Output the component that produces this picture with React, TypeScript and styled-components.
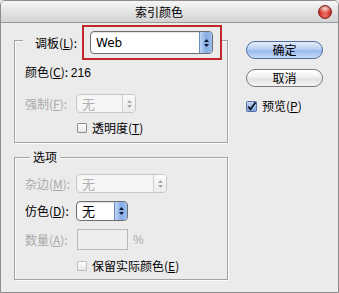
import React from 'react';
import styled, { createGlobalStyle } from 'styled-components';

const Global = createGlobalStyle`
  html, body { margin: 0; padding: 0; background: #ebebeb; }
  body {
    font-family: "Noto Sans CJK SC", "Noto Sans", sans-serif;
    font-size: 12px;
    color: #000;
  }
`;

const Window = styled.div`
  width: 339px;
  height: 293px;
  box-sizing: border-box;
  border: 1px solid #8c8c8c;
  border-radius: 5px 5px 0 0;
  background: #ebebeb;
  overflow: hidden;
  display: flex;
  flex-direction: column;
`;

const TitleBar = styled.div`
  height: 22px;
  box-sizing: border-box;
  flex: none;
  display: flex;
  align-items: center;
  background: linear-gradient(#f6f6f6, #e4e4e4 50%, #d3d3d3);
  border-bottom: 1px solid #9a9a9a;
`;

const Title = styled.div`
  flex: 1;
  text-align: center;
  font-size: 12px;
  line-height: 14px;
`;

const CloseArea = styled.div`
  width: 21px;
  display: flex;
  align-items: center;
`;

const CloseButton = styled.span`
  width: 14px;
  height: 14px;
  margin-left: 1px;
  box-sizing: border-box;
  border-radius: 50%;
  border: 1px solid #7c2320;
  background:
    radial-gradient(ellipse 60% 40% at 50% 22%, rgba(255, 230, 225, 0.95), rgba(255, 200, 190, 0) 100%),
    radial-gradient(circle at 50% 75%, #f07a6e 0%, #d3332b 45%, #98100d 100%);
`;

const Body = styled.div`
  display: flex;
  padding-left: 13px;
`;

const LeftCol = styled.div`
  width: 214px;
  display: flex;
  flex-direction: column;
`;

const Group = styled.div<{ $top: number; $pb: number }>`
  margin-top: ${(p) => p.$top}px;
  border: 1px solid #a2a2a2;
  box-shadow: inset 1px 1px 0 #fbfbfb, 1px 1px 0 #fbfbfb;
  padding: 0 0 ${(p) => p.$pb}px 10px;
  display: flex;
  flex-direction: column;
`;

const PaletteHeader = styled.div`
  margin-top: -16px;
  margin-left: -2px;
  align-self: flex-start;
  background: #ebebeb;
  padding-left: 12px;
  display: flex;
  align-items: center;
`;

const HeaderLabel = styled.span`
  width: 47px;
  line-height: 14px;
`;

const Highlight = styled.div`
  border: 2px solid #c1262d;
  padding: 4px 7px 4px 6px;
  background: #ebebeb;
`;

const Legend = styled.div`
  margin-top: -8px;
  margin-left: 5px;
  align-self: flex-start;
  padding: 0 3px;
  background: #ebebeb;
  line-height: 14px;
`;

const Row = styled.div<{ $mt: number; $h: number }>`
  margin-top: ${(p) => p.$mt}px;
  height: ${(p) => p.$h}px;
  display: grid;
  grid-template-columns: 51px auto;
  align-items: center;
  justify-items: start;
`;

const Label = styled.span<{ $disabled?: boolean }>`
  line-height: 14px;
  white-space: nowrap;
  color: ${(p) => (p.$disabled ? '#aaaaaa' : '#000')};
`;

const InfoLine = styled.div<{ $mt: number }>`
  margin-top: ${(p) => p.$mt}px;
  line-height: 14px;
`;

const Num = styled.span`
  font-family: "Liberation Sans", sans-serif;
  font-size: 12px;
`;

const SelectBox = styled.div<{ $w: number; $h: number; $disabled?: boolean }>`
  width: ${(p) => p.$w}px;
  height: ${(p) => p.$h}px;
  box-sizing: border-box;
  border: 1px solid ${(p) => (p.$disabled ? '#c6c6c6' : '#6e6e6e')};
  border-radius: 4px;
  background: ${(p) => (p.$disabled ? '#f5f5f5' : '#fff')};
  box-shadow: ${(p) => (p.$disabled ? 'none' : 'inset 0 1px 1px rgba(0,0,0,0.12)')};
  display: flex;
  align-items: center;
  overflow: hidden;
`;

const SelectText = styled.span<{ $disabled?: boolean; $latin?: boolean }>`
  flex: 1;
  padding-left: 5px;
  line-height: 14px;
  font-family: ${(p) =>
    p.$latin ? '"DejaVu Sans", sans-serif' : '"Noto Sans CJK SC", sans-serif'};
  font-size: ${(p) => (p.$latin ? 12 : 13)}px;
  color: ${(p) => (p.$disabled ? '#b0b0b0' : '#000')};
`;

const Stepper = styled.span<{ $disabled?: boolean }>`
  width: 13px;
  align-self: stretch;
  box-sizing: border-box;
  border-left: 1px solid ${(p) => (p.$disabled ? '#d0d0d0' : '#6c8cc0')};
  background: ${(p) =>
    p.$disabled
      ? 'linear-gradient(#fbfbfb, #ececec)'
      : 'linear-gradient(90deg, #c2d6f4, #86acE6 50%, #9cbdee)'};
  display: flex;
  flex-direction: column;
  align-items: center;
  justify-content: center;
  gap: 2px;
`;

const Arrow = ({ up, color }: { up: boolean; color: string }) => (
  <svg width="5" height="3" viewBox="0 0 5 3" style={{ display: 'block' }}>
    <polygon points={up ? '0,3 5,3 2.5,0' : '0,0 5,0 2.5,3'} fill={color} />
  </svg>
);

const Select = ({
  w,
  h,
  text,
  disabled,
  latin,
}: {
  w: number;
  h: number;
  text: string;
  disabled?: boolean;
  latin?: boolean;
}) => (
  <SelectBox $w={w} $h={h} $disabled={disabled}>
    <SelectText $disabled={disabled} $latin={latin}>
      {text}
    </SelectText>
    <Stepper $disabled={disabled}>
      <Arrow up color={disabled ? '#a8a8a8' : '#101830'} />
      <Arrow up={false} color={disabled ? '#a8a8a8' : '#101830'} />
    </Stepper>
  </SelectBox>
);

const InputWrap = styled.div`
  display: flex;
  align-items: center;
  margin-left: 1px;
`;

const InputBox = styled.div`
  width: 51px;
  height: 21px;
  box-sizing: border-box;
  border: 1px solid #b9b9b9;
  background: #eeeeee;
`;

const Percent = styled.span`
  margin-left: 5px;
  color: #aaaaaa;
  font-family: "Liberation Sans", sans-serif;
  font-size: 12px;
`;

const CheckRow = styled.div<{ $mt: number; $ml: number }>`
  margin-top: ${(p) => p.$mt}px;
  margin-left: ${(p) => p.$ml}px;
  height: 14px;
  display: flex;
  align-items: center;
  gap: 5px;
  line-height: 14px;
`;

const Box = styled.span<{ $light?: boolean }>`
  width: 10px;
  height: 10px;
  box-sizing: border-box;
  border: 1px solid ${(p) => (p.$light ? '#bdbdbd' : '#8e8e8e')};
  border-radius: 1px;
  background: linear-gradient(#ffffff, #e6e6e6);
`;

const CheckedBox = () => (
  <svg width="11" height="11" viewBox="0 0 11 11" style={{ display: 'block' }}>
    <defs>
      <linearGradient id="cbg" x1="0" y1="0" x2="0" y2="1">
        <stop offset="0" stopColor="#c3d6f3" />
        <stop offset="1" stopColor="#7ea3dc" />
      </linearGradient>
    </defs>
    <rect x="0.5" y="0.5" width="10" height="10" rx="1" fill="url(#cbg)" stroke="#5570a0" />
    <path d="M2.3 5.6 L4.5 8.3 L9.6 1.2" fill="none" stroke="#0d1424" strokeWidth="1.8" />
  </svg>
);

const RightCol = styled.div`
  margin-left: 18px;
  width: 77px;
  display: flex;
  flex-direction: column;
`;

const PillButton = styled.div<{ $primary?: boolean; $mt: number }>`
  margin-top: ${(p) => p.$mt}px;
  height: 18px;
  box-sizing: border-box;
  border-radius: 9px;
  border: 1px solid ${(p) => (p.$primary ? '#4f6f9f' : '#7d7d7d')};
  background: ${(p) =>
    p.$primary
      ? 'linear-gradient(#e4edfa, #b9d0f1 45%, #98b9ea 55%, #c6dbf6)'
      : 'linear-gradient(#ffffff, #f1f1f1 45%, #e2e2e2 55%, #f4f4f4)'};
  display: flex;
  align-items: center;
  justify-content: center;
  font-size: 12px;
  line-height: 14px;
`;

const U = styled.span`
  text-decoration: underline;
`;

export default function App() {
  return (
    <>
      <Global />
      <Window>
        <TitleBar>
          <Title>索引颜色</Title>
          <CloseArea>
            <CloseButton />
          </CloseArea>
        </TitleBar>
        <Body>
          <LeftCol>
            <Group $top={17} $pb={7}>
              <PaletteHeader>
                <HeaderLabel>
                  调板(<U>L</U>):
                </HeaderLabel>
                <Highlight>
                  <Select w={123} h={23} text="Web" latin />
                </Highlight>
              </PaletteHeader>
              <InfoLine $mt={5}>
                颜色(<U>C</U>): <Num>216</Num>
              </InfoLine>
              <Row $mt={14} $h={19}>
                <Label $disabled>
                  强制(<U>F</U>):
                </Label>
                <Select w={60} h={19} text="无" disabled />
              </Row>
              <CheckRow $mt={8} $ml={52}>
                <Box />
                <span>
                  透明度(<U>T</U>)
                </span>
              </CheckRow>
            </Group>
            <Group $top={14} $pb={6}>
              <Legend>选项</Legend>
              <Row $mt={10} $h={19}>
                <Label $disabled>
                  杂边(<U>M</U>):
                </Label>
                <Select w={91} h={19} text="无" disabled />
              </Row>
              <Row $mt={8} $h={20}>
                <Label>
                  仿色(<U>D</U>):
                </Label>
                <Select w={52} h={20} text="无" />
              </Row>
              <Row $mt={8} $h={21}>
                <Label $disabled>
                  数量(<U>A</U>):
                </Label>
                <InputWrap>
                  <InputBox />
                  <Percent>%</Percent>
                </InputWrap>
              </Row>
              <CheckRow $mt={9} $ml={52}>
                <Box $light />
                <span>
                  保留实际颜色(<U>E</U>)
                </span>
              </CheckRow>
            </Group>
          </LeftCol>
          <RightCol>
            <PillButton $primary $mt={18}>
              确定
            </PillButton>
            <PillButton $mt={10}>取消</PillButton>
            <CheckRow $mt={12} $ml={0}>
              <CheckedBox />
              <span>
                预览(<U>P</U>)
              </span>
            </CheckRow>
          </RightCol>
        </Body>
      </Window>
    </>
  );
}
